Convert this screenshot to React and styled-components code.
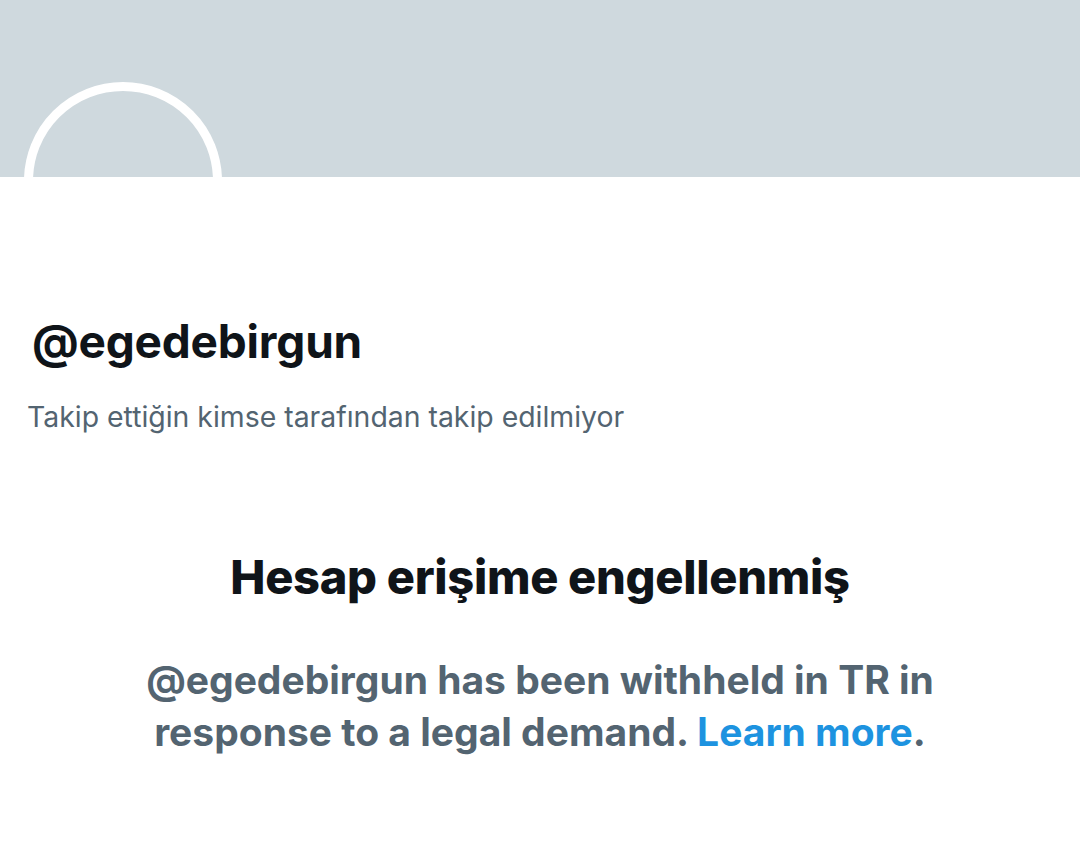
import React from "react";
import styled, { createGlobalStyle } from "styled-components";

const GlobalStyle = createGlobalStyle`
	html, body {
		margin: 0;
		padding: 0;
		background: #fff;
		font-family: Inter, "Noto Sans", sans-serif;
	}
`;

const Page = styled.div`
	width: 1080px;
	height: 847px;
	overflow: hidden;
	background: #fff;
`;

const Banner = styled.div`
	position: relative;
	height: 177px;
	background: #cfd9de;
`;

const Avatar = styled.div`
	position: absolute;
	left: 24px;
	top: 82px;
	width: 180px;
	height: 180px;
	border: 9px solid #fff;
	border-radius: 50%;
	background: transparent;
	clip-path: inset(0 0 calc(100% - 95px) 0);
`;

const Profile = styled.div`
	padding: 141px 27px 0;
`;

const Handle = styled.div`
	margin-left: 5px;
	font-size: 46px;
	font-weight: 700;
	color: #0f1419;
	line-height: 1;
	letter-spacing: -0.2px;
`;

const FollowNote = styled.div`
	margin-top: 35px;
	font-size: 28.4px;
	font-weight: 400;
	color: #536471;
`;

const Notice = styled.div`
	display: flex;
	flex-direction: column;
	align-items: center;
	text-align: center;
	padding: 114px 40px 0;
`;

const Title = styled.div`
	font-size: 47px;
	font-weight: 800;
	color: #0f1419;
	letter-spacing: -0.3px;
`;

const Message = styled.div`
	margin-top: 49px;
	max-width: 830px;
	font-size: 39px;
	line-height: 52px;
	font-weight: 700;
	color: #536471;
`;

const Link = styled.a`
	color: #1d93e0;
	text-decoration: none;
`;

export default function App() {
	return (
		<Page>
			<GlobalStyle />
			<Banner>
				<Avatar />
			</Banner>
			<Profile>
				<Handle>@egedebirgun</Handle>
				<FollowNote>Takip ettiğin kimse tarafından takip edilmiyor</FollowNote>
			</Profile>
			<Notice>
				<Title>Hesap erişime engellenmiş</Title>
				<Message>
					@egedebirgun has been withheld in TR in response to a legal demand.{" "}
					<Link href="#">Learn more</Link>.
				</Message>
			</Notice>
		</Page>
	);
}
